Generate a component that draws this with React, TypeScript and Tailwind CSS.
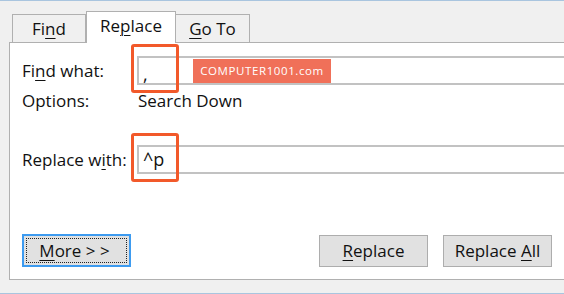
import React from "react";

const font = { fontFamily: '"Open Sans", "Noto Sans", sans-serif' };

function U({ children }: { children: React.ReactNode }) {
  return <span className="underline decoration-1 underline-offset-[3px]">{children}</span>;
}

export default function App() {
  return (
    <div
      className="w-[564px] h-[294px] bg-[#f0f0f0] overflow-hidden flex flex-col border-t border-b border-[#a9c5df] text-[17px] text-[#111]"
      style={font}
    >
      {/* Tabs */}
      <div className="flex items-end pl-[12px] pt-[10px] relative z-10">
        <div className="w-[74px] h-[28px] border border-b-0 border-[#b0b0b0] bg-[#f0f0f0] flex items-center justify-center">
          <span>Fi<U>n</U>d</span>
        </div>
        <div className="w-[90px] h-[32px] -mb-px border border-b-0 border-[#b0b0b0] bg-white flex items-center justify-center pb-[3px]">
          <span>Re<U>p</U>lace</span>
        </div>
        <div className="w-[74px] h-[28px] border border-b-0 border-l-0 border-[#b0b0b0] bg-[#f0f0f0] flex items-center justify-center">
          <span><U>G</U>o To</span>
        </div>
      </div>

      {/* Panel */}
      <div className="ml-[9px] bg-white border-l border-t border-b border-[#b0b0b0] relative pt-[13px] pb-[12px] pl-[12px]">
        <div className="flex items-center h-[29px]">
          <div className="w-[115px]">
            Fi<U>n</U>d what:
          </div>
          <div className="flex-1 h-full border-2 border-r-0 border-[#c2c2c2] flex items-center pl-[4px] text-[18px]">
            <span className="mt-[7px]">,</span>
          </div>
        </div>
        <div className="flex items-center h-[20px] mt-[6px]">
          <div className="w-[116px]">Options:</div>
          <div>Search Down</div>
        </div>
        <div className="flex items-center h-[29px] mt-[34px]">
          <div className="w-[115px]">
            Replace w<U>i</U>th:
          </div>
          <div className="flex-1 h-full border-2 border-r-0 border-[#c2c2c2] flex items-center pl-[4px] text-[18px]">
            <span>^p</span>
          </div>
        </div>
        <div className="flex items-center mt-[60px] pr-[12px]">
          <div className="w-[109px] h-[33px] border-2 border-[#3d9bf0] bg-[#e1e1e1] p-[2px]">
            <div className="w-full h-full border border-dotted border-[#222] flex items-center justify-center pr-[4px]">
              <span><U>M</U>ore &gt; &gt;</span>
            </div>
          </div>
          <div className="flex-1" />
          <div className="w-[109px] h-[32px] border border-[#adadad] bg-[#e1e1e1] flex items-center justify-center">
            <span><U>R</U>eplace</span>
          </div>
          <div className="w-[109px] h-[32px] ml-[15px] border border-[#adadad] bg-[#e1e1e1] flex items-center justify-center">
            <span>Replace <U>A</U>ll</span>
          </div>
        </div>

        {/* Overlays */}
        <div className="absolute left-[121px] top-[1px] w-[48px] h-[49px] border-[3px] border-[#f2592a] rounded-[3px]" />
        <div className="absolute left-[121px] top-[90px] w-[48px] h-[49px] border-[3px] border-[#f2592a] rounded-[3px]" />
        <div className="absolute left-[183px] top-[16px] w-[138px] h-[24px] bg-[#f07059] text-white text-[11.5px] tracking-[0.6px] flex items-center justify-center">
          <span>COMPUTER1001.com</span>
        </div>
      </div>
    </div>
  );
}
